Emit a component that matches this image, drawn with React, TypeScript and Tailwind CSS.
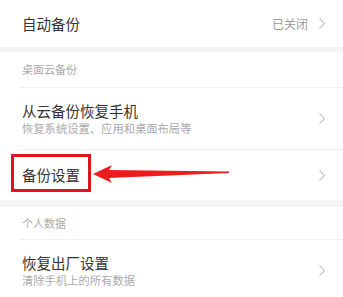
import React from "react";

const font = { fontFamily: '"Noto Sans CJK SC", "Noto Sans", sans-serif' };

function Chevron() {
  return (
    <svg width="8" height="13" viewBox="0 0 8 13" className="shrink-0">
      <path d="M1.5 1.5 L6.5 6.5 L1.5 11.5" fill="none" stroke="#c4c4c4" strokeWidth="1.1" />
    </svg>
  );
}

function Band({ h }: { h: string }) {
  return <div className={`${h} bg-[#f4f4f4]`} />;
}

export default function App() {
  return (
    <div className="relative w-[343px] h-[297px] overflow-hidden bg-white" style={font}>
      {/* 自动备份 */}
      <div className="h-[47px] flex items-center pl-[22px] pr-[17px]">
        <span className="flex-1 text-[14.5px] text-[#333]">自动备份</span>
        <span className="text-[12px] text-[#999] mr-[10px]">已关闭</span>
        <Chevron />
      </div>
      <Band h="h-[5px]" />

      {/* 桌面云备份 */}
      <div className="h-[35px] flex items-center pl-[22px] text-[11px] text-[#aaa]">桌面云备份</div>
      <div className="ml-[20px] border-t border-[#efefef]" />

      <div className="h-[61px] flex items-center pl-[22px] pr-[17px]">
        <div className="flex-1 flex flex-col">
          <span className="text-[14.5px] leading-[19px] text-[#333]">从云备份恢复手机</span>
          <span className="text-[11.3px] leading-[17px] text-[#aaa]">恢复系统设置、应用和桌面布局等</span>
        </div>
        <Chevron />
      </div>
      <div className="ml-[20px] border-t border-[#efefef]" />

      <div className="h-[50px] flex items-center pl-[22px] pr-[17px]">
        <span className="flex-1 text-[14.5px] text-[#333]">备份设置</span>
        <Chevron />
      </div>
      <Band h="h-[7px]" />

      {/* 个人数据 */}
      <div className="h-[32px] flex items-center pl-[22px] text-[11px] text-[#aaa]">个人数据</div>
      <div className="ml-[20px] border-t border-[#efefef]" />

      <div className="h-[61px] flex items-center pl-[22px] pr-[17px]">
        <div className="flex-1 flex flex-col">
          <span className="text-[14.5px] leading-[19px] text-[#333]">恢复出厂设置</span>
          <span className="text-[11.3px] leading-[17px] text-[#aaa]">清除手机上的所有数据</span>
        </div>
        <Chevron />
      </div>

      {/* annotation */}
      <div className="absolute left-[11px] top-[154px] w-[80px] h-[38px] border-[3px] border-[#e0141b]" />
      <svg className="absolute left-[92px] top-[162px]" width="140" height="22" viewBox="0 0 140 22">
        <polygon
          points="1,12 20,3 17,8 137,9.5 137,11 17,16 20,21"
          fill="#ee1c1c"
        />
      </svg>
    </div>
  );
}
